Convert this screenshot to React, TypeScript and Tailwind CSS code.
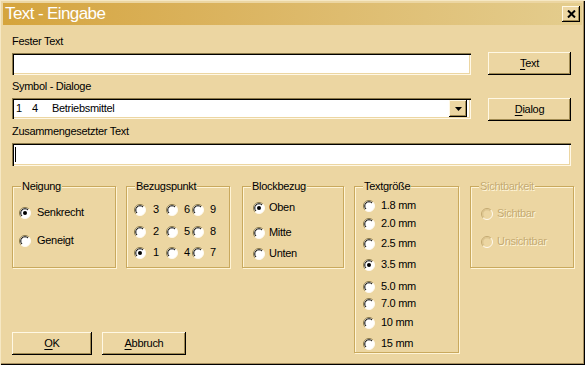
import React from "react"

const font = { fontFamily: '"Liberation Sans", Arial, sans-serif' }

const raised =
  "shadow-[inset_-1px_-1px_0_#000,inset_1px_1px_0_#fff8e4,inset_-2px_-2px_0_#a08a52]"
const sunken =
  "shadow-[inset_1px_1px_0_#8a7848,inset_2px_2px_0_#000,inset_-1px_-1px_0_#fff8e6,inset_-2px_-2px_0_#ecd6a2]"

const Radio = ({ checked = false, disabled = false }: { checked?: boolean; disabled?: boolean }) => (
  <svg width="12" height="12" viewBox="0 0 12 12" className="shrink-0">
    <circle cx="6" cy="6" r="5.5" fill={disabled ? "#ecd6a2" : "#fff"} />
    <path d="M2.1 9.9 A5.5 5.5 0 0 1 9.9 2.1" fill="none" stroke={disabled ? "#c4aa72" : "#8a7848"} strokeWidth="1" />
    <path d="M3 9 A4.2 4.2 0 0 1 9 3" fill="none" stroke={disabled ? "#d8c08a" : "#000"} strokeWidth="1" />
    <path d="M9.9 2.1 A5.5 5.5 0 0 1 2.1 9.9" fill="none" stroke="#fffaf0" strokeWidth="1" />
    {checked && <circle cx="6" cy="6" r="2" fill="#000" />}
  </svg>
)

const Option = ({
  label,
  checked,
  disabled,
  gap = "gap-[5px]",
}: {
  label: string
  checked?: boolean
  disabled?: boolean
  gap?: string
}) => (
  <div className={`flex items-center h-[13px] ${gap}`}>
    <Radio checked={checked} disabled={disabled} />
    <span
      className={
        disabled ? "text-[#c4aa72] [text-shadow:1px_1px_0_#fff6dc]" : "text-black"
      }
    >
      {label}
    </span>
  </div>
)

const Group = ({
  title,
  className,
  disabled,
  children,
}: {
  title: string
  className: string
  disabled?: boolean
  children: React.ReactNode
}) => (
  <div
    className={`relative shrink-0 border border-[#c9a95e] shadow-[1px_1px_0_#fff4d6,inset_1px_1px_0_#fff4d6] ${className}`}
  >
    <span
      className={`absolute left-[8px] -top-[7px] px-[1px] bg-[#ecd6a2] leading-[13px] ${
        disabled ? "text-[#c4aa72] [text-shadow:1px_1px_0_#fff6dc]" : "text-black"
      }`}
    >
      {title}
    </span>
    {children}
  </div>
)

const Btn = ({ first, rest, className }: { first: string; rest: string; className: string }) => (
  <div className={`flex items-center justify-center bg-[#ecd6a2] ${raised} ${className}`}>
    <span>
      <span className="underline underline-offset-2">{first}</span>
      {rest}
    </span>
  </div>
)

const sizes = [
  { label: "1.8 mm", mt: "mt-0" },
  { label: "2.0 mm", mt: "mt-[5px]" },
  { label: "2.5 mm", mt: "mt-[7px]" },
  { label: "3.5 mm", mt: "mt-[8px]", checked: true },
  { label: "5.0 mm", mt: "mt-[9px]" },
  { label: "7.0 mm", mt: "mt-[4px]" },
  { label: "10 mm", mt: "mt-[6px]" },
  { label: "15 mm", mt: "mt-[8px]" },
]

const points = [
  ["3", "6", "9"],
  ["2", "5", "8"],
  ["1", "4", "7"],
]

export default function App() {
  return (
    <div
      style={font}
      className="w-[585px] h-[365px] overflow-hidden bg-[#ecd6a2] text-[11px] leading-[13px] tracking-[-0.3px] text-black shadow-[inset_1px_1px_0_#f6e8c4,inset_-1px_-1px_0_#000,inset_-2px_-2px_0_#a89060]"
    >
      {/* Titelleiste */}
      <div className="mx-[3px] mt-[3px] h-[22px] flex items-center justify-between bg-gradient-to-r from-[#d5a43c] to-[#e4cd8e]">
        <span className="pl-[2px] text-[17px] leading-[22px] tracking-[-0.6px] text-white">
          Text - Eingabe
        </span>
        <div className={`mr-[2px] w-[18px] h-[16px] flex items-center justify-center bg-[#ecd6a2] ${raised}`}>
          <svg width="9" height="8" viewBox="0 0 9 8">
            <path d="M1 0.5 L8 7.5 M8 0.5 L1 7.5" stroke="#000" strokeWidth="2" />
          </svg>
        </div>
      </div>

      <div className="pl-[12px]">
        {/* Fester Text */}
        <div className="flex mt-[10px]">
          <div className="w-[459px]">
            <div>Fester Text</div>
            <div className={`mt-[5px] h-[22px] bg-white ${sunken}`} />
          </div>
          <Btn first="T" rest="ext" className="ml-[17px] mt-[17px] w-[83px] h-[23px]" />
        </div>

        {/* Symbol - Dialoge */}
        <div className="flex">
          <div className="w-[459px]">
            <div className="mt-[5px]">Symbol - Dialoge</div>
            <div className={`mt-[5px] h-[21px] bg-white flex items-center ${sunken}`}>
              <span className="pl-[4px] w-[20px]">1</span>
              <span className="w-[20px]">4</span>
              <span className="flex-1">Betriebsmittel</span>
              <div className={`mr-[4px] w-[18px] h-[17px] flex items-center justify-center bg-[#ecd6a2] ${raised}`}>
                <svg width="7" height="4" viewBox="0 0 7 4">
                  <path d="M0 0 H7 L3.5 4 Z" fill="#000" />
                </svg>
              </div>
            </div>
          </div>
          <Btn first="D" rest="ialog" className="ml-[17px] mt-[23px] w-[83px] h-[23px]" />
        </div>

        {/* Zusammengesetzter Text */}
        <div className="mt-[4px]">Zusammengesetzter Text</div>
        <div className={`mt-[5px] w-[559px] h-[23px] bg-white flex items-center ${sunken}`}>
          <div className="ml-[3px] w-[1px] h-[15px] bg-black" />
        </div>

        {/* Gruppen */}
        <div className="flex items-start mt-[20px]">
          <div className="w-[332px] shrink-0">
            <div className="flex items-start">
              <Group title="Neigung" className="w-[104px] h-[82px] pl-[6px] pt-[19px]">
                <Option label="Senkrecht" checked gap="gap-[6px]" />
                <div className="mt-[15px]">
                  <Option label="Geneigt" gap="gap-[6px]" />
                </div>
              </Group>

              <Group title="Bezugspunkt" className="ml-[10px] w-[104px] h-[82px] pl-[7px] pt-[16px]">
                {points.map((row, i) => (
                  <div key={i} className={`flex ${i === 1 ? "mt-[9px]" : i === 2 ? "mt-[8px]" : ""}`}>
                    <div className="w-[32px]">
                      <Option label={row[0]} checked={row[0] === "1"} gap="gap-[7px]" />
                    </div>
                    <div className="w-[26px]">
                      <Option label={row[1]} gap="gap-[6px]" />
                    </div>
                    <Option label={row[2]} gap="gap-[6px]" />
                  </div>
                ))}
              </Group>

              <Group title="Blockbezug" className="ml-[12px] w-[102px] h-[82px] pl-[10px] pt-[14px]">
                <Option label="Oben" checked gap="gap-[4px]" />
                <div className="mt-[12px]">
                  <Option label="Mitte" gap="gap-[4px]" />
                </div>
                <div className="mt-[8px]">
                  <Option label="Unten" gap="gap-[4px]" />
                </div>
              </Group>
            </div>

            <div className="flex mt-[64px]">
              <Btn first="O" rest="K" className="w-[80px] h-[23px]" />
              <Btn first="A" rest="bbruch" className="ml-[10px] w-[84px] h-[23px]" />
            </div>
          </div>

          <Group title="Textgröße" className="ml-[10px] w-[105px] h-[167px] pl-[8px] pt-[12px]">
            {sizes.map((s) => (
              <div key={s.label} className={s.mt}>
                <Option label={s.label} checked={s.checked} gap="gap-[6px]" />
              </div>
            ))}
          </Group>

          <Group title="Sichtbarkeit" disabled className="ml-[11px] w-[104px] h-[82px] pl-[10px] pt-[20px]">
            <Option label="Sichtbar" disabled gap="gap-[4px]" />
            <div className="mt-[15px]">
              <Option label="Unsichtbar" disabled gap="gap-[4px]" />
            </div>
          </Group>
        </div>
      </div>
    </div>
  )
}
